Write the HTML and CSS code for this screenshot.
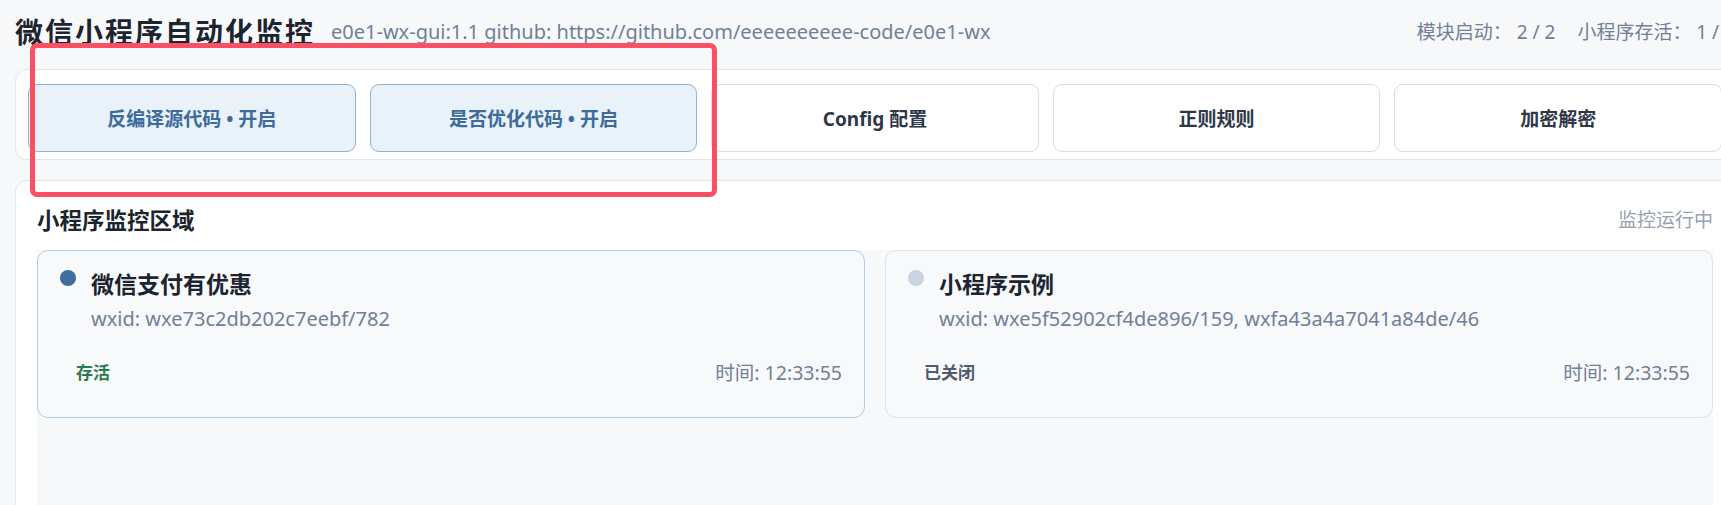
FILE: index.html
```html
<!DOCTYPE html>
<html lang="zh-CN">

<head>
    <meta charset="UTF-8">
    <meta name="viewport" content="width=device-width, initial-scale=1.0">
    <title>微信小程序自动化监控</title>
    <link rel="stylesheet" href="styles.css">
</head>

<body>
    <div class="app">
        <header class="topbar">
            <div class="brand">
                <h1>微信小程序自动化监控</h1>
                <span class="version">e0e1-wx-gui:1.1 github: https://github.com/eeeeeeeeee-code/e0e1-wx</span>
            </div>
            <div class="stats">
                <span>模块启动： 2 / 2</span>
                <span>小程序存活： 1 / 1</span>
            </div>
        </header>

        <div class="toolbar">
            <button class="tool-btn on">反编译源代码 • 开启</button>
            <button class="tool-btn on">是否优化代码 • 开启</button>
            <button class="tool-btn">Config 配置</button>
            <button class="tool-btn">正则规则</button>
            <button class="tool-btn">加密解密</button>
        </div>

        <section class="monitor">
            <div class="monitor-head">
                <h2>小程序监控区域</h2>
                <span class="monitor-state">监控运行中</span>
            </div>

            <div class="card-grid">
                <div class="app-card alive">
                    <div class="card-head">
                        <span class="dot"></span>
                        <div>
                            <div class="card-title">微信支付有优惠</div>
                            <div class="wxid">wxid: wxe73c2db202c7eebf/782</div>
                        </div>
                    </div>
                    <div class="card-foot">
                        <span class="status">存活</span>
                        <span class="time">时间: 12:33:55</span>
                    </div>
                </div>

                <div class="app-card">
                    <div class="card-head">
                        <span class="dot"></span>
                        <div>
                            <div class="card-title">小程序示例</div>
                            <div class="wxid">wxid: wxe5f52902cf4de896/159, wxfa43a4a7041a84de/46</div>
                        </div>
                    </div>
                    <div class="card-foot">
                        <span class="status">已关闭</span>
                        <span class="time">时间: 12:33:55</span>
                    </div>
                </div>
            </div>
        </section>
    </div>

    <!-- highlight frame around the two switch buttons -->
    <div class="mark"></div>
</body>

</html>
```

FILE: styles.css
```css
body {
    margin: 0;
    background-color: #f7f8fa;
    font-family: "Segoe UI", "Noto Sans", "Noto Sans CJK SC", sans-serif;
    color: #1f2733;
    overflow: hidden;
}

.app {
    width: 1720px;
    padding-left: 15px;
}

.topbar {
    height: 62px;
    display: flex;
    align-items: center;
    justify-content: space-between;
    margin-bottom: 7px;
}

.brand {
    display: flex;
    align-items: center;
}

.brand h1 {
    margin: 0 16px 0 0;
    font-size: 28px;
    letter-spacing: 2px;
    font-weight: 700;
    color: #1c2430;
}

.version {
    font-size: 20px;
    color: #718096;
}

.stats {
    display: flex;
    gap: 22px;
    font-size: 19px;
    color: #718096;
}

.toolbar {
    display: grid;
    grid-template-columns: repeat(5, 1fr);
    gap: 14px;
    padding: 14px 12px 7px;
    background-color: #fff;
    border: 1px solid #e0e6ee;
    border-radius: 12px;
    margin-bottom: 20px;
}

.tool-btn {
    height: 68px;
    font-family: inherit;
    font-size: 19px;
    font-weight: 700;
    color: #2d3748;
    background-color: #fff;
    border: 1px solid #d7dee8;
    border-radius: 9px;
    cursor: pointer;
}

.tool-btn.on {
    color: #3d6b9c;
    background-color: #e9f1f9;
    border-color: #8fb2d8;
}

.monitor {
    background-color: #fff;
    border: 1px solid #e0e6ee;
    border-radius: 12px;
    padding: 22px 21px 0;
}

.monitor-head {
    display: flex;
    align-items: center;
    justify-content: space-between;
    height: 32px;
    margin-bottom: 15px;
}

.monitor-head h2 {
    margin: 0;
    font-size: 22.5px;
    font-weight: 700;
    color: #1c2430;
}

.monitor-state {
    font-size: 19px;
    color: #98a2b0;
}

.card-grid {
    display: grid;
    grid-template-columns: 1fr 1fr;
    gap: 20px;
    align-content: start;
    min-height: 320px;
    background-color: #f7f8fa;
}

.app-card {
    background-color: #f7f9fb;
    border: 1px solid #dce3ec;
    border-radius: 11px;
    padding: 18px 22px 31px;
}

.app-card.alive {
    border-color: #b3cbe4;
}

.card-head {
    display: flex;
    align-items: flex-start;
    gap: 15px;
}

.dot {
    width: 16px;
    height: 16px;
    margin-top: 1px;
    border-radius: 50%;
    background-color: #cbd5e1;
    flex-shrink: 0;
}

.alive .dot {
    background-color: #3f6e9f;
}

.card-title {
    font-size: 23px;
    line-height: 30px;
    font-weight: 700;
    color: #1c2430;
}

.wxid {
    margin-top: 7px;
    font-size: 20px;
    line-height: 26px;
    color: #718096;
}

.card-foot {
    display: flex;
    justify-content: space-between;
    align-items: center;
    margin-top: 28px;
    line-height: 26px;
}

.status {
    padding-left: 16px;
    font-size: 17px;
    font-weight: 700;
    color: #505b6b;
}

.alive .status {
    color: #2c7a4f;
}

.time {
    font-size: 19.5px;
    color: #718096;
}

.mark {
    position: absolute;
    left: 30px;
    top: 43px;
    width: 677px;
    height: 144px;
    border: 5.5px solid #fd4f63;
    border-radius: 7px;
    pointer-events: none;
}
```
